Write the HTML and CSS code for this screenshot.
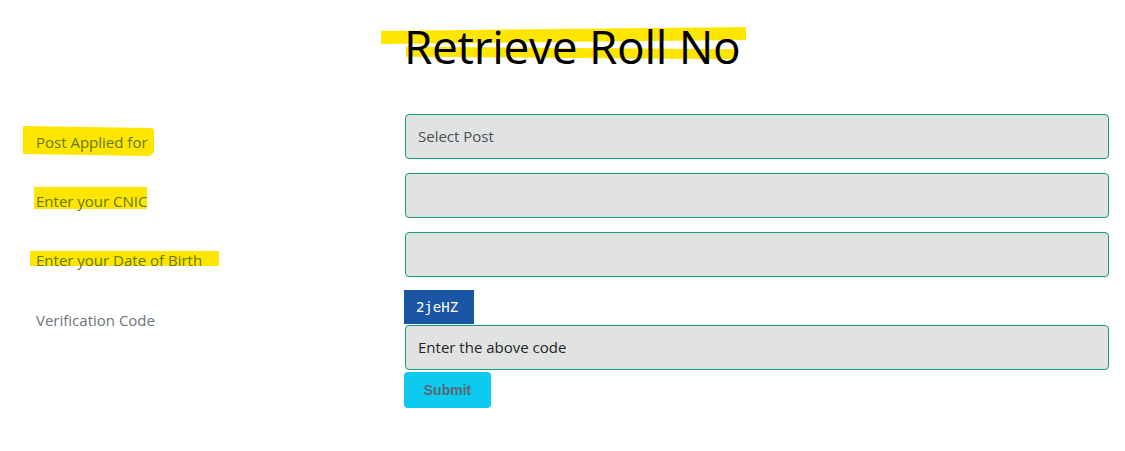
FILE: index.html
```html
<!DOCTYPE html>
<html>
<head>
<meta charset="utf-8">
<link rel="stylesheet" href="styles.css">
</head>
<body>
<div class="page">
  <div class="title-row">
    <h1 class="title"><span class="title-text">Retrieve Roll No</span></h1>
  </div>
  <form class="form">
    <div class="row">
      <label class="label"><span class="hl hl-post">Post Applied for</span></label>
      <div class="field"><div class="input select">Select Post</div></div>
    </div>
    <div class="row">
      <label class="label"><span class="hl hl-cnic">Enter your CNIC</span></label>
      <div class="field"><div class="input"></div></div>
    </div>
    <div class="row">
      <label class="label"><span class="hl hl-dob">Enter your Date of Birth</span></label>
      <div class="field"><div class="input"></div></div>
    </div>
    <div class="row row-code">
      <label class="label label-code">Verification Code</label>
      <div class="field">
        <div class="captcha">2jeHZ</div>
        <div class="input code">Enter the above code</div>
        <button type="button" class="submit">Submit</button>
      </div>
    </div>
  </form>
</div>
</body>
</html>
```

FILE: styles.css
```css
html, body {
  margin: 0;
  padding: 0;
  background: #ffffff;
}
body {
  font-family: "Open Sans", "Noto Sans", "Liberation Sans", sans-serif;
  width: 1125px;
  height: 451px;
  overflow: hidden;
}
.page {
  display: flex;
  flex-direction: column;
}
.title-row {
  padding-left: 404px;
  padding-top: 15px;
  height: 114px;
  box-sizing: border-box;
}
.title {
  margin: 0;
  font-weight: 400;
  font-size: 46px;
  line-height: 62px;
  color: #000;
  letter-spacing: -0.3px;
}
.title-text {
  position: relative;
  display: inline-block;
  z-index: 0;
}
.title-text::before {
  content: "";
  position: absolute;
  left: -23px;
  right: -6px;
  top: 14px;
  height: 13px;
  background: #ffe600;
  transform: skewY(-0.6deg);
  z-index: -1;
}
.title-text::after {
  content: "";
  position: absolute;
  left: 2px;
  right: 6px;
  top: 33px;
  height: 10px;
  background: #ffe600;
  transform: skewY(0.4deg);
  z-index: -1;
}
.form {
  display: flex;
  flex-direction: column;
  gap: 14px;
}
.row {
  display: grid;
  grid-template-columns: 405px 704px;
}
.label {
  padding-left: 36px;
  padding-top: 17px;
  font-size: 15px;
  line-height: 22px;
  color: #6c757d;
}
.hl {
  position: relative;
  display: inline-block;
  z-index: 0;
  color: #65781c;
}
.hl::before {
  content: "";
  position: absolute;
  background: #ffe600;
  z-index: -1;
}
.hl-post::before {
  left: -13px;
  right: -6px;
  top: -4px;
  bottom: -2px;
  transform: skewY(1deg);
  border-radius: 1px 3px 6px 1px;
}
.hl-cnic::before {
  left: -2px;
  right: 0;
  top: -3px;
  bottom: 3px;
}
.hl-dob::before {
  left: -6px;
  right: -17px;
  top: 2px;
  bottom: 5px;
}
.field {
  display: flex;
  flex-direction: column;
  align-items: flex-start;
}
.input {
  width: 704px;
  height: 45px;
  box-sizing: border-box;
  border: 1px solid #129b7e;
  border-radius: 4px;
  background: #e1e3e3;
  padding: 0 12px;
  font-size: 15px;
  line-height: 43px;
  color: #495057;
}
.row-code .label-code {
  padding-top: 19px;
}
.row-code {
  margin-top: -1px;
}
.captcha {
  width: 70px;
  height: 34px;
  margin-left: -1px;
  background: #1a56a3;
  color: #ffffff;
  font-family: "DejaVu Sans Mono", "Liberation Mono", monospace;
  font-size: 14px;
  line-height: 34px;
  text-align: center;
  box-sizing: border-box;
  padding-right: 4px;
}
.code {
  margin-top: 1px;
  color: #212529;
}
.submit {
  margin-top: 2px;
  margin-left: -1px;
  width: 87px;
  height: 36px;
  border: none;
  border-radius: 4px;
  background: #0dcaf0;
  color: #5b6770;
  font-family: "Liberation Sans", Arial, sans-serif;
  font-weight: 700;
  font-size: 14px;
  padding: 0;
  cursor: pointer;
}
```
